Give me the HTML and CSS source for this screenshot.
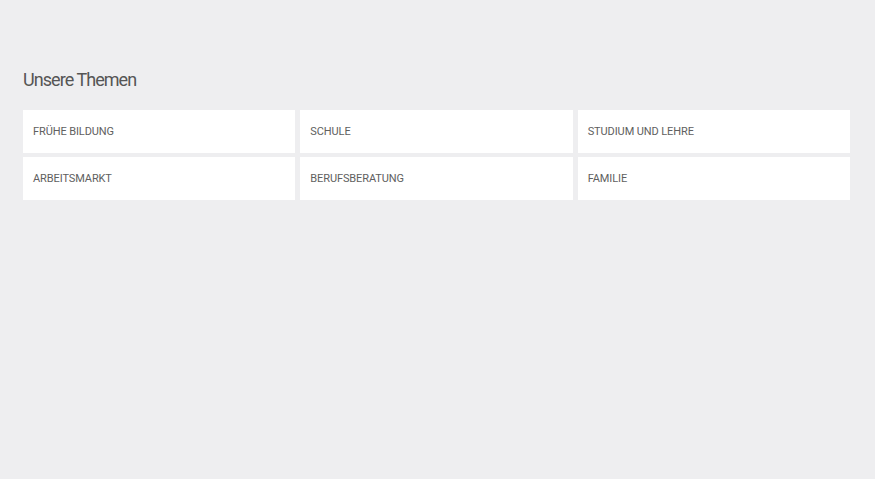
FILE: index.html
```html
<!DOCTYPE html>
<html lang="de">
<head>
<meta charset="utf-8">
<title>Unsere Themen</title>
<link rel="stylesheet" href="styles.css">
</head>
<body>
<main class="page">
  <h2 class="title">Unsere Themen</h2>
  <div class="grid">
    <a class="card" href="#">FRÜHE BILDUNG</a>
    <a class="card" href="#">SCHULE</a>
    <a class="card" href="#">STUDIUM UND LEHRE</a>
    <a class="card" href="#">ARBEITSMARKT</a>
    <a class="card" href="#">BERUFSBERATUNG</a>
    <a class="card" href="#">FAMILIE</a>
  </div>
</main>
</body>
</html>
```
FILE: styles.css
```css
html, body {
  margin: 0;
  padding: 0;
  background: #eeeef0;
  font-family: Roboto, "Liberation Sans", sans-serif;
}
.page {
  width: 827px;
  padding: 68px 0 0 23px;
}
.title {
  margin: 0 0 18px 0;
  font-size: 18px;
  line-height: 24px;
  font-weight: 400;
  color: #555555;
  letter-spacing: -0.95px;
}
.grid {
  display: grid;
  grid-template-columns: repeat(3, 1fr);
  column-gap: 5px;
  row-gap: 4px;
}
.card {
  display: flex;
  align-items: center;
  height: 43px;
  padding: 0 10px;
  background: #ffffff;
  color: #606060;
  font-size: 11px;
  letter-spacing: -0.1px;
  text-decoration: none;
}
```
